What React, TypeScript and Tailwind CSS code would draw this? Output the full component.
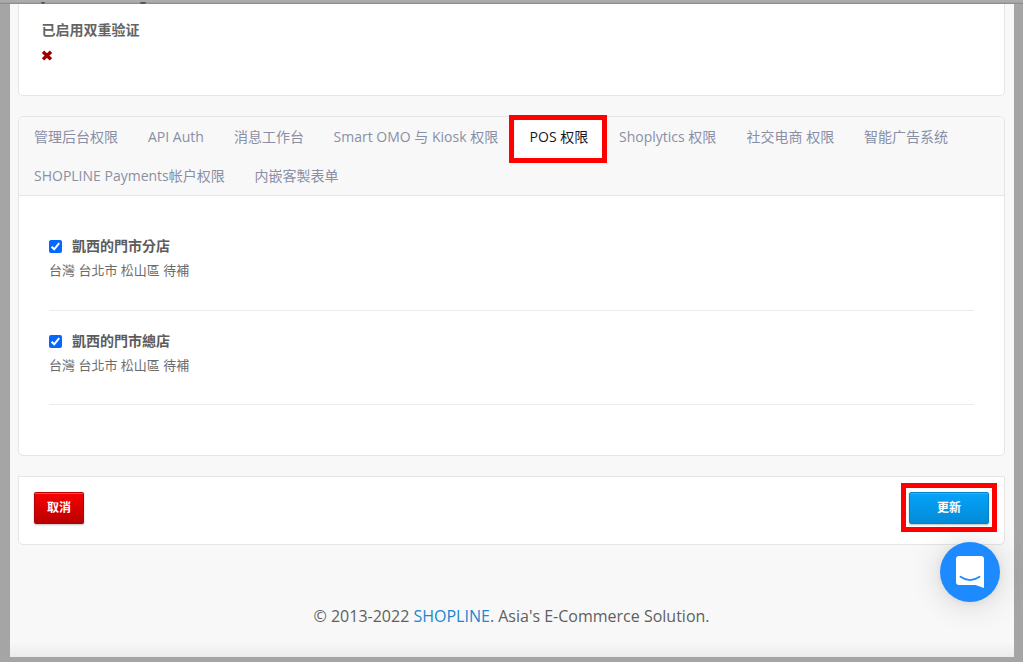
import React from "react";

const firstRow = [
  { label: "管理后台权限", width: "w-[114px]" },
  { label: "API Auth", width: "w-[86px]" },
  { label: "消息工作台", width: "w-[99.6px]" },
  { label: "Smart OMO 与 Kiosk 权限", width: "w-[196px]" },
  { label: "POS 权限", width: "w-[89.4px]", active: true },
  { label: "Shoplytics 权限", width: "w-[127.6px]" },
  { label: "社交电商 权限", width: "w-[117.4px]" },
  { label: "智能广告系统", width: "w-[114px]" },
];

const secondRow = [
  { label: "SHOPLINE Payments帐户权限", width: "w-[220.6px]" },
  { label: "内嵌客製表单", width: "w-[114px]" },
];

type TabItem = { label: string; width: string; active?: boolean };

function Tab({ label, width, active }: TabItem) {
  return (
    <li
      className={`relative h-[39px] shrink-0 px-[15px] whitespace-nowrap leading-[40px] ${width} ${
        active ? "bg-white text-[#17181f]" : "text-[#8a8fa6]"
      }`}
    >
      {label}
      {active && (
        <span className="absolute -top-[2px] -left-[5.6px] h-[48px] w-[98px] border-[5px] border-[#ff0000]">
          <span className="absolute inset-x-0 bottom-0 h-px bg-white" />
          <span className="absolute inset-y-0 right-0 w-[3px] bg-white" />
        </span>
      )}
    </li>
  );
}

function Store({ name, last }: { name: string; last?: boolean }) {
  return (
    <div className={`border-b border-[#ebebeb] pt-[18px] ${last ? "h-[94px]" : "h-[95px]"}`}>
      <label className="flex h-[24px] items-center">
        <span className="flex h-[13px] w-[13px] items-center justify-center rounded-[2px] bg-[#0568fd]">
          <svg width="13" height="13" viewBox="0 0 13 13" fill="none">
            <path d="M2.6 6.8 L5.2 9.3 L10.2 3.1" stroke="#fff" strokeWidth="2" />
          </svg>
        </span>
        <span className="ml-[10px] pb-[2px] text-[14px] font-bold text-[#5c5c5c]">{name}</span>
      </label>
      <p className="h-[24px] text-[13px] leading-[24px] text-[#6b6b6b]">台灣 台北市 松山區 待補</p>
    </div>
  );
}

export default function App() {
  return (
    <div className="h-[662px] w-[1023px] overflow-hidden bg-[#a5a5a5] pl-[10px] font-['Open_Sans','Noto_Sans_CJK_SC',sans-serif] text-[14px] text-[#5c5c5c]">
      <div className="-ml-[10px] h-[4px] bg-linear-to-b from-[#ababab] from-50% to-[#858585]" />
      <main className="relative h-[653px] w-[1004px] bg-[#f8f8f8] px-[8px]">
        <section className="h-[92px] w-[987px] rounded-b-[5px] border border-t-0 border-[#e5e5e5] bg-white pl-[22.5px]">
          <h2 className="pt-[15px] text-[14px] leading-[22px] font-bold text-[#646464]">已启用双重验证</h2>
          <svg className="mt-[9px] ml-[0.5px]" width="10" height="11" viewBox="0 0 10 11">
            <path d="M2.2 3 L7.8 8.2 M7.8 3 L2.2 8.2" stroke="#9c0000" strokeWidth="3.4" strokeLinecap="square" />
          </svg>
          <span className="absolute -top-[2px] left-[31px] h-[2px] w-[4px] rounded-b-full bg-[#555]" />
          <span className="absolute -top-[2px] left-[130px] h-[2px] w-[6px] rounded-b-full bg-[#555]" />
        </section>

        <section className="mt-[20px] h-[340px] w-[987px] rounded-[5px] border border-[#e5e5e5] bg-white">
          <nav className="h-[79px] rounded-t-[4px] border-b border-[#e5e5e5] bg-[#f8f8f8]">
            <ul className="flex">
              {firstRow.map((t) => (
                <Tab key={t.label} {...t} />
              ))}
            </ul>
            <ul className="flex">
              {secondRow.map((t) => (
                <Tab key={t.label} {...t} />
              ))}
            </ul>
          </nav>
          <div className="mx-[30px] pt-[20px] font-['Open_Sans','Noto_Sans_CJK_TC',sans-serif]">
            <Store name="凱西的門市分店" />
            <Store name="凱西的門市總店" last />
          </div>
        </section>

        <section className="mt-[20px] flex h-[69px] w-[987px] items-start justify-between rounded-b-[5px] border border-[#e5e5e5] bg-white px-[15px] pt-[15px] text-[12px] font-bold text-white">
          <button className="h-[32px] w-[50px] rounded-[2px] border border-[#b00008] border-t-[#bd0000] bg-linear-to-b from-[#f80000] to-[#b90000] shadow-[0_1px_2px_rgba(0,0,0,0.25),inset_0_1px_0_rgba(255,255,255,0.3)]">
            取消
          </button>
          <button className="relative h-[32px] w-[80px] rounded-[2px] border border-[#0780c4] bg-linear-to-b from-[#04a3fa] to-[#048bd8] shadow-[0_1px_2px_rgba(0,0,0,0.25),inset_0_1px_0_rgba(255,255,255,0.15)]">
            更新
            <span className="absolute -top-[10px] -left-[9px] h-[49px] w-[96px] border-[5px] border-[#ff0000]" />
          </button>
        </section>

        <footer className="mt-[59px] flex h-[54px] justify-center text-[16px] leading-[24px] text-[#5f5f5f]">
          <p className="-mr-[7px] h-[24px] w-[404px] whitespace-nowrap">
            © 2013-2022 <a className="text-[#2185d0]">SHOPLINE</a>. Asia's E-Commerce Solution.
          </p>
        </footer>

        <div className="absolute bottom-0 left-0 h-[16px] w-full bg-linear-to-b from-transparent to-black/5" />
        <button className="absolute top-[538px] left-[930px] h-[60px] w-[60px] rounded-full bg-[#1d8bff] shadow-[0_2px_32px_rgba(0,0,0,0.16),0_1px_6px_rgba(0,0,0,0.06)]">
          <svg width="60" height="60" viewBox="0 0 60 60">
            <path d="M19 14H41Q44 14 44 17V46L35.5 43H19Q16 43 16 40V17Q16 14 19 14Z" fill="#fff" />
            <path d="M20.5 34.8Q30 41.4 39.5 34.8" fill="none" stroke="#1d8bff" strokeWidth="1.8" strokeLinecap="round" />
          </svg>
        </button>
      </main>
    </div>
  );
}
